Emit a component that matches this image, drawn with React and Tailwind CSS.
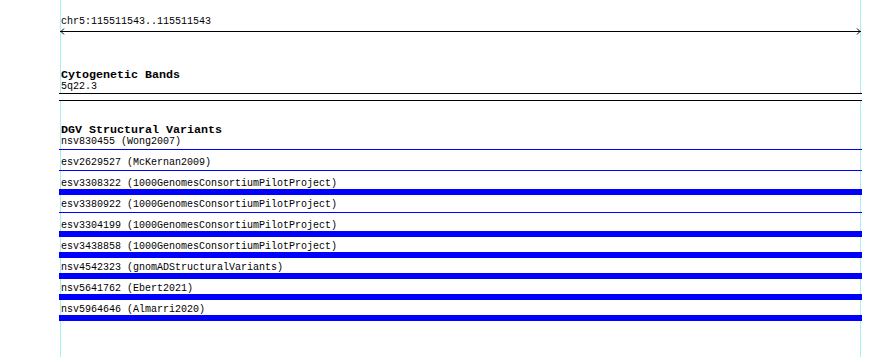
import React from 'react';

const variants = [
  { id: 'nsv830455', study: 'Wong2007', thin: true },
  { id: 'esv2629527', study: 'McKernan2009', thin: true },
  { id: 'esv3308322', study: '1000GenomesConsortiumPilotProject' },
  { id: 'esv3380922', study: '1000GenomesConsortiumPilotProject', thin: true },
  { id: 'esv3304199', study: '1000GenomesConsortiumPilotProject' },
  { id: 'esv3438858', study: '1000GenomesConsortiumPilotProject' },
  { id: 'nsv4542323', study: 'gnomADStructuralVariants' },
  { id: 'nsv5641762', study: 'Ebert2021' },
  { id: 'nsv5964646', study: 'Almarri2020' },
];

function VariantRow({ id, study, thin }) {
  return (
    <div className="flex flex-col pb-[3px]">
      <div className="h-[12px] leading-[14px] whitespace-pre">
        {id} ({study})
      </div>
      <div className="h-[6px] -ml-[2px] w-[803px] pt-[2px]">
        {thin ? (
          <div className="h-px bg-[#0000ff]" />
        ) : (
          <div className="-mt-[2px] h-[6px] bg-[#0000ff]" />
        )}
      </div>
    </div>
  );
}

function App() {
  return (
    <div
      className="w-[890px] h-[357px] bg-white text-black overflow-hidden text-[10px]"
      style={{ fontFamily: '"Liberation Mono", "DejaVu Sans Mono", monospace' }}
    >
      <div className="ml-[60px] w-[801px] h-[357px] border-x border-[#a8eef6] pt-[15px]">
        <div className="h-[12px] leading-[14px]">chr5:115511543..115511543</div>
        <svg className="-ml-px block" width="802" height="8" viewBox="0 0 802 8">
          <line x1="0" y1="4.5" x2="801" y2="4.5" stroke="#000" strokeWidth="1" />
          <polyline points="4,1.5 1,4.5 4,7.5" fill="none" stroke="#000" strokeWidth="1" />
          <polyline points="797,1.5 800,4.5 797,7.5" fill="none" stroke="#000" strokeWidth="1" />
        </svg>

        <div className="mt-[33px] h-[12px] leading-[14px] text-[11.67px] font-bold">Cytogenetic Bands</div>
        <div className="h-[13px] leading-[14px]">5q22.3</div>
        <div className="-ml-[2px] w-[803px] h-[8px] border-y border-black bg-white" />

        <div className="mt-[22px] h-[12px] leading-[14px] text-[11.67px] font-bold">DGV Structural Variants</div>
        {variants.map((v) => (
          <VariantRow key={v.id} {...v} />
        ))}
      </div>
    </div>
  );
}

export default App;
